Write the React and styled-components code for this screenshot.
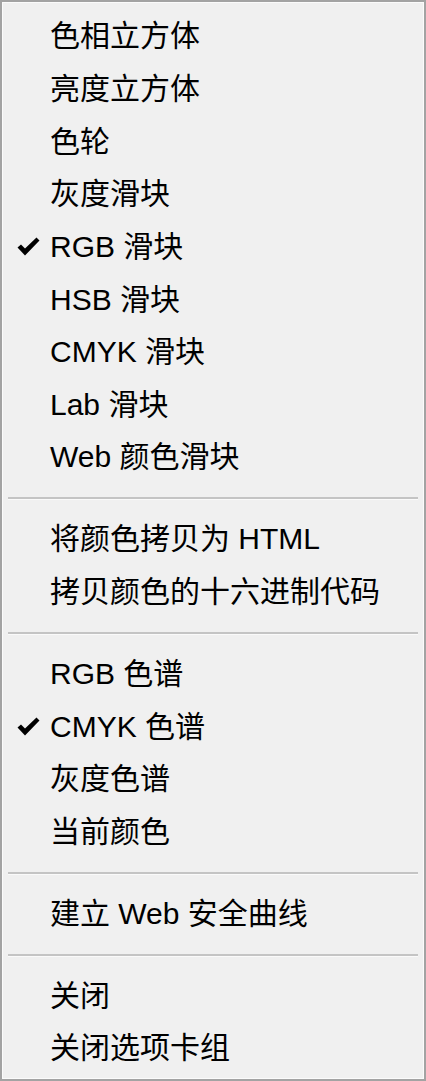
import styled, { createGlobalStyle } from 'styled-components'

const GlobalStyle = createGlobalStyle`
  html, body {
    margin: 0;
    padding: 0;
    background: #f0f0f0;
  }
`

const Menu = styled.div`
  box-sizing: border-box;
  width: 426px;
  height: 1081px;
  background: #f0f0f0;
  border: 2px solid #a3a3a3;
  box-shadow: inset 0 0 0 1px #fbfbfb;
  padding: 8px 0 6px 0;
  display: flex;
  flex-direction: column;
  font-family: "Liberation Sans", "Noto Sans CJK SC", sans-serif;
  font-size: 30px;
  color: #000;
`

const Item = styled.div`
  height: 52.65px;
  display: flex;
  align-items: center;
  padding-left: 15px;
  white-space: nowrap;
`

const CheckSlot = styled.span`
  width: 33px;
  height: 22px;
  display: flex;
  align-items: center;
  flex-shrink: 0;
`

const Label = styled.span`
  line-height: 1;
`

const Separator = styled.div`
  height: 29.3px;
  display: flex;
  align-items: center;
  padding: 0 6px;
  &::after {
    content: '';
    flex: 1;
    height: 2px;
    background: #c4c4c4;
    box-shadow: 0 1px 0 #fafafa;
  }
`

const Check = () => (
  <svg width="23" height="20" viewBox="0 0 23 20">
    <path d="M0.5 10.5 L4 7.5 L8 11.5 L19.5 0.5 L22.5 3.5 L8 18.5 Z" fill="#000" />
  </svg>
)

const groups = [
  [
    { label: '色相立方体' },
    { label: '亮度立方体' },
    { label: '色轮' },
    { label: '灰度滑块' },
    { label: 'RGB 滑块', checked: true },
    { label: 'HSB 滑块' },
    { label: 'CMYK 滑块' },
    { label: 'Lab 滑块' },
    { label: 'Web 颜色滑块' },
  ],
  [
    { label: '将颜色拷贝为 HTML' },
    { label: '拷贝颜色的十六进制代码' },
  ],
  [
    { label: 'RGB 色谱' },
    { label: 'CMYK 色谱', checked: true },
    { label: '灰度色谱' },
    { label: '当前颜色' },
  ],
  [{ label: '建立 Web 安全曲线' }],
  [{ label: '关闭' }, { label: '关闭选项卡组' }],
]

function App() {
  return (
    <>
      <GlobalStyle />
      <Menu>
        {groups.map((group, gi) => (
          <div key={gi}>
            {gi > 0 && <Separator />}
            {group.map((item) => (
              <Item key={item.label}>
                <CheckSlot>{item.checked && <Check />}</CheckSlot>
                <Label>{item.label}</Label>
              </Item>
            ))}
          </div>
        ))}
      </Menu>
    </>
  )
}

export default App
